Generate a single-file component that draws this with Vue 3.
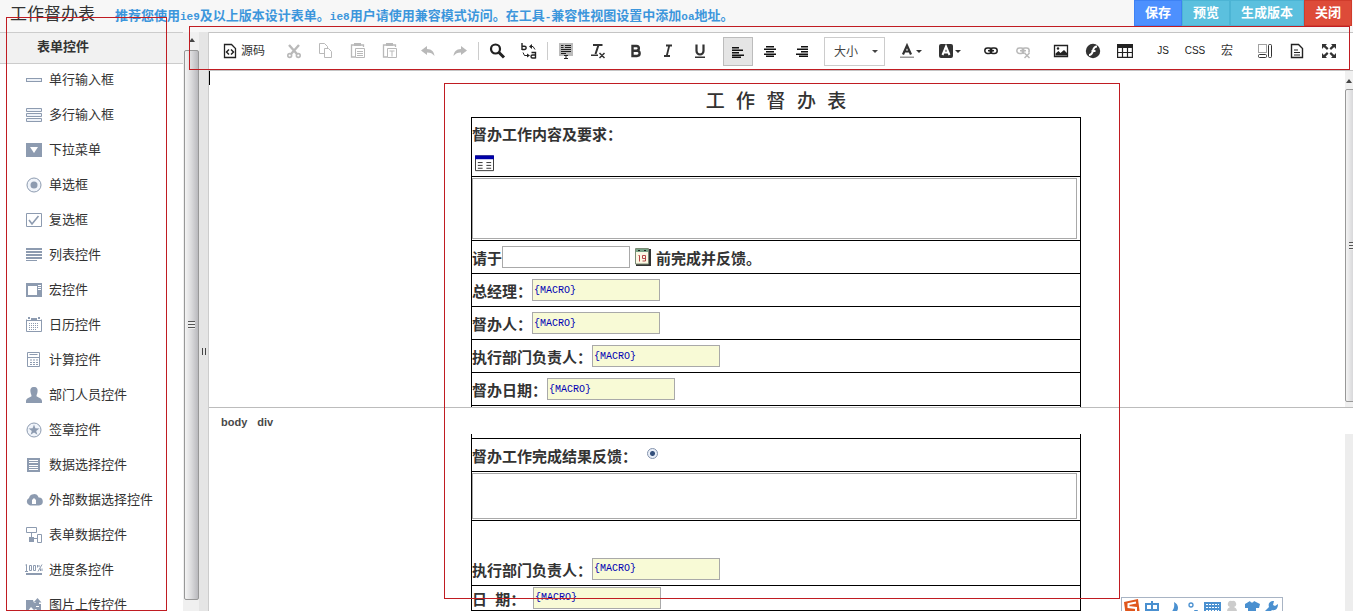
<script setup>
const notice = [
  { t: '推荐您使用' },
  { t: 'ie9', latin: true },
  { t: '及以上版本设计表单。' },
  { t: 'ie8', latin: true },
  { t: '用户请使用兼容模式访问。在工具' },
  { t: '-', latin: true },
  { t: '兼容性视图设置中添加' },
  { t: 'oa', latin: true },
  { t: '地址。' },
]

const actions = [
  { label: '保存', kind: 'save' },
  { label: '预览', kind: 'info' },
  { label: '生成版本', kind: 'info' },
  { label: '关闭', kind: 'close' },
]

const c = '#8d9bb0'
const controls = [
  { label: '单行输入框', icon: `<rect x=".5" y="6.500" width="15" height="3" fill="#eef2f8" stroke="${c}"/>` },
  { label: '多行输入框', icon: `<g fill="#eef2f8" stroke="${c}"><path d="M.5 1.500h15v3H.5zM.5 6.500h15v3H.5zM.5 11.500h15v3H.5z"/></g>` },
  { label: '下拉菜单', icon: `<path fill="${c}" d="M0 1h16v14H0z"/><path fill="#fff" d="M4 5h8l-4 6z"/>` },
  { label: '单选框', icon: `<circle cx="8" cy="8" r="7" fill="#f0f4fa" stroke="${c}"/><circle cx="8" cy="8" r="3.500" fill="${c}"/>` },
  { label: '复选框', icon: `<path fill="#fff" stroke="${c}" d="M.5 1.500h15v13H.5z"/><path fill="none" stroke="${c}" stroke-width="1.600" d="M3 8l3 4 6.500-8"/>` },
  { label: '列表控件', icon: `<path fill="${c}" d="M0 1h16v2H0zM0 4h16v2H0zM0 7h16v2H0zM0 10h16v2H0zM0 13h11v1H0z"/>` },
  { label: '宏控件', icon: `<path fill="${c}" d="M0 1h16v14H0z"/><path fill="#fff" d="M2 4h9v9H2zM12 3h3v1h-3zM12 5h3v1h-3zM12 7h3v1h-3z"/>` },
  { label: '日历控件', icon: `<path fill="none" stroke="${c}" d="M.5 2.500v12h15v-12M0 3.500h16"/><path fill="${c}" d="M2 0h2v2H2zM12 0h2v2h-2zM5 1h6v3H5z"/><path stroke="${c}" stroke-dasharray="1 1" d="M3 6.500h10M3 8.500h10M3 10.500h10M3 12.500h7"/>` },
  { label: '计算控件', icon: `<path fill="none" stroke="${c}" d="M1.500.5h12v14h-12zM3.500 2.500h8M1.500 5.500h12"/><path stroke="${c}" stroke-dasharray="2 1" d="M4 8h8M4 10.500h8M4 12.500h8"/>` },
  { label: '部门人员控件', icon: `<path fill="${c}" d="M8 0c3 0 4 2 3.500 5-.2 2-1 2.500-1 4 0 1 5.500 2 5.500 5v2H0v-2c0-3 5.500-4 5.500-5 0-1.500-.8-2-1-4C4 2 5 0 8 0z"/>` },
  { label: '签章控件', icon: `<circle cx="8" cy="8" r="7" fill="#f0f4fa" stroke="${c}"/><path fill="${c}" d="M8 2.500l1.400 3.800 4 .1-3.200 2.500 1.200 3.900L8 10.500l-3.400 2.300 1.200-3.900-3.200-2.500 4-.1z"/>` },
  { label: '数据选择控件', icon: `<path fill="${c}" d="M1 1h13v14H1z"/><path stroke="#fff" d="M3 3.500h9M3 5.500h9M3 8.500h9M3 10.500h9M3 12.500h9"/>` },
  { label: '外部数据选择控件', icon: `<path fill="${c}" d="M4 13.500a4 4 0 0 1-1-7.500 5 5 0 0 1 9.600-.5A4 4 0 0 1 13 13.500z"/><path fill="#fff" d="M8 6l2 2v4H6V8z"/>` },
  { label: '表单数据控件', icon: `<path fill="none" stroke="${c}" d="M.5.5h10v5H.5zM5.500 6v5M5.500 11.500H11M11.500 7.500h4v8h-4z"/><path fill="${c}" d="M3 10h5v5H3z"/>` },
  { label: '进度条控件', icon: `<path fill="none" stroke="${c}" d="M-.5 3l1-.5V9M-1 9.500h3M3.500 3.500h2v5h-2zM7.500 3.500h2v5h-2zM16 2.500l-4 7M11.500 3v2.500M13 3v2M14.500 6.500V9M16 6.500V9"/><path fill="${c}" d="M0 11h16v2H0z"/>` },
  { label: '图片上传控件', icon: `<path fill="${c}" d="M0 3h7l1 3h2v4h3V7h2v9H0zM11.500 1l4 4.500h-2.500V9h-3V5.500H7.500z"/><path fill="#fff" d="M1 15l4-5 3 3 2-1 3 3z"/>` },
]

const d = '#333'
const g = '#b9b9b9'
const tools = [
  { items: [
    { name: '剪切', icon: `<g stroke="${g}" fill="none" stroke-width="2.400"><path d="M3 2l8 9M13 2l-8 9"/></g><g stroke="${g}" fill="none" stroke-width="1.600"><circle cx="3.700" cy="12.500" r="1.900"/><circle cx="12.300" cy="12.500" r="1.900"/></g>` },
    { name: '复制', icon: `<path fill="#fff" stroke="${g}" d="M1.500.5h5l3 3v7h-8z"/><path fill="#fff" stroke="${g}" d="M6.500 5.500h4l3 3v6h-7z"/>` },
    { name: '粘贴', icon: `<path fill="none" stroke="${g}" stroke-width="1.300" d="M4 2H1.500v12H5M11 2h2.500v2"/><path fill="${g}" d="M4 0h7v3H4z"/><path fill="#fff" stroke="${g}" d="M5.500 5.500h9v9h-9zM7 8.500h6M7 10.500h6M7 12.500h6"/>` },
    { name: '粘贴为纯文本', icon: `<path fill="none" stroke="${g}" stroke-width="1.300" d="M4 2H1.500v12H5M11 2h2.500v2"/><path fill="${g}" d="M4 0h7v3H4z"/><path fill="#fff" stroke="${g}" d="M5.500 5.500h9v9h-9zM7.500 8h5M10 8v5.500"/>` },
  ] },
  { items: [
    { name: '撤销', icon: `<path fill="${g}" d="M1 7.500L7 3v3c5 0 7 3 7.500 7-2-2.500-4-3.500-7.500-3.500V12z"/>` },
    { name: '重做', icon: `<path fill="${g}" d="M15 7.500L9 3v3c-5 0-7 3-7.500 7 2-2.500 4-3.500 7.500-3.500V12z"/>` },
  ], sep: true },
  { items: [
    { name: '查找', icon: `<circle cx="6.500" cy="6" r="4.500" fill="none" stroke="#222" stroke-width="2.200"/><path stroke="#222" stroke-width="3" d="M9.500 9l5.500 5.500"/>` },
    { name: '替换', icon: `<g fill="none" stroke="#222" stroke-width="1.400"><path d="M1 0v7M1 3.200h2.500a1.500 1.500 0 0 1 0 3.300H1M10.500 9.500h4v6M14.500 12h-3a1.500 1.500 0 0 0 0 3h3"/></g><path fill="none" stroke="#222" d="M9 3.500h3l2 3M2 9.500l1.500 3h4"/><path fill="#222" d="M8 3.500l3-2.500v5zM9 12.500l-3-2v4z"/>` },
  ], sep: true },
  { items: [
    { name: '全选', icon: `<path fill="#bbb" d="M1 0h14v13H1z"/><path stroke="#222" d="M3 2.500h2.500M7 2.500h6M3 4.500h2.500M7 4.500h6M3 6.500h10M3 8.500h10M3 10.500h5M6 12.500h4M8 12v4M6 15.500h4"/>` },
    { name: '清除格式', icon: `<path fill="none" stroke="${d}" stroke-width="2" d="M3 2h9.500M8.500 2l-3 9"/><path stroke="${d}" stroke-width="1.500" d="M1 12.200h7M9.500 10l5 5M14.500 10l-5 5"/>` },
  ] },
  { items: [
    { name: '加粗', icon: `<path fill="none" stroke="${d}" stroke-width="2.400" d="M4.500 3h4a2.200 2.200 0 0 1 0 4.700h-4h4.500a2.500 2.500 0 0 1 0 5.300H4.500z"/>` },
    { name: '倾斜', icon: `<path fill="none" stroke="${d}" stroke-width="1.800" d="M6 2.500h6M4 13h6M9.300 2.500L6.700 13"/>` },
    { name: '下划线', icon: `<path fill="none" stroke="${d}" stroke-width="2.200" d="M4.500 1.500v6.500a3.500 3.500 0 0 0 7 0V1.500"/><path fill="${d}" d="M3 13.500h10V15H3z"/>` },
  ] },
  { items: [
    { name: '左对齐', active: true, icon: `<path fill="#111" d="M2 3h7v1.500H2zM2 5.500h11V7H2zM2 8h7v1.500H2zM2 10.500h12V12H2zM2 12.500h9V14H2z"/>` },
    { name: '居中', icon: `<path fill="#111" d="M4 3h8v1.500H4zM2 5.500h12V7H2zM4 8h8v1.500H4zM2 10.500h12V12H2zM4 12.500h8V14H4z"/>` },
    { name: '右对齐', icon: `<path fill="#111" d="M7 3h7v1.500H7zM3 5.500h11V7H3zM7 8h7v1.500H7zM2 10.500h12V12H2zM5 12.500h9V14H5z"/>` },
  ] },
]
const tools2 = [
  { items: [
    { name: '文本颜色', wide: true, icon: `<path fill="none" stroke="${d}" stroke-width="2.200" d="M3 11.500L7 2.500l4 9M4.500 8.500h5"/><path fill="#999" d="M0 13.500h14V15H0z"/><path fill="${d}" d="M16 7h6l-3 3z"/>` },
    { name: '背景颜色', wide: true, icon: `<rect y="1" width="14" height="14" rx="2" fill="${d}"/><path fill="none" stroke="#fff" stroke-width="2" d="M3.500 12L7 3.500l3.500 8.500M4.500 9.500h5"/><path fill="${d}" d="M16 7h6l-3 3z"/>` },
  ] },
  { items: [
    { name: '插入链接', icon: `<g fill="none" stroke="#222" stroke-width="1.500"><rect x="1.800" y="5" width="7" height="5.500" rx="2.700"/><rect x="7.200" y="5" width="7" height="5.500" rx="2.700"/><path d="M5 7.700h6"/></g>` },
    { name: '取消链接', icon: `<g fill="none" stroke="${g}" stroke-width="1.500"><rect x="1.800" y="5" width="7" height="5.500" rx="2.700"/><rect x="7.200" y="5" width="7" height="5.500" rx="2.700"/><path d="M5 7.700h6"/></g><path stroke="#fff" stroke-width="4" d="M10 10l4 4M14 10l-4 4"/><path stroke="${g}" stroke-width="1.500" d="M9.500 10l5 5M14.500 10l-5 5"/>` },
  ] },
  { items: [
    { name: '图像', icon: `<path fill="#fff" stroke="#222" stroke-width="1.300" d="M1.500 2.500h13v11h-13z"/><circle cx="5" cy="5.500" r="1.200" fill="#222"/><path fill="#222" d="M2.500 12.500v-2l3-2.500 2 2L11 7l3 3v2.500z"/>` },
    { name: 'Flash', icon: `<circle cx="8" cy="8" r="7.200" fill="${d}"/><path fill="none" stroke="#fff" stroke-width="2" d="M12 3.500c-3 0-3.500 2-4 4s-1.500 4.500-4 4.500M6.500 8h4"/>` },
    { name: '表格', icon: `<path fill="none" stroke="#222" stroke-width="1.200" d="M.6 2h14.800v12.400H.6zM5.500 4v10M10.500 4v10M0 9.500h16"/><path fill="#222" d="M0 1h16v4H0z"/>` },
  ] },
  { items: [
    { name: 'JS', text: 'JS' },
    { name: 'CSS', text: 'CSS' },
    { name: '宏', text: '宏', cjk: true },
  ] },
  { items: [
    { name: '显示区块', icon: `<path fill="none" stroke="#444" stroke-dasharray="1 1" d="M1.500 1.500h8v8h-8z"/><rect x="1.500" y="11.500" width="8" height="3" rx="1" fill="none" stroke="#333"/><rect x="11.500" y="1.500" width="3" height="13" rx="1" fill="none" stroke="#333"/>` },
    { name: '模板', icon: `<path fill="#fff" stroke="#222" stroke-width="1.400" d="M2.500 1.500h7l4 4v9h-11z"/><path stroke="#222" stroke-width="1.200" d="M5 7h4M5 9.500h6M5 12h6"/>` },
    { name: '全屏', icon: `<path fill="#333" d="M1 1h5L4.600 2.400 7.500 5.300 6 7 2.800 4 1 6zM15 1v5l-1.800-2L10 7 8.500 5.300l2.900-2.900L10 1zM1 15v-5l1.800 2L6 9l1.500 1.700-2.900 2.900L6 15zM15 15h-5l1.400-1.400-2.900-2.900L10 9l3.200 3 1.800-2z"/>` },
  ] },
]

const macros = [
  { id: 'gm', label: '总经理：' },
  { id: 'owner', label: '督办人：' },
  { id: 'lead', label: '执行部门负责人：' },
  { id: 'date', label: '督办日期：' },
]
</script>

<template>
  <div class="app">
    <header class="top">
      <h1>工作督办表</h1>
      <p class="notice"><span v-for="(n, i) in notice" :key="i" :class="{ latin: n.latin }">{{ n.t }}</span></p>
      <nav class="actions">
        <button v-for="a in actions" :key="a.label" type="button" :class="a.kind">{{ a.label }}</button>
      </nav>
    </header>

    <div class="main">
      <aside class="side">
        <h2>表单控件</h2>
        <ul>
          <li v-for="item in controls" :key="item.label">
            <button type="button">
              <svg width="16" height="16" viewBox="0 0 16 16" overflow="visible" aria-hidden="true" v-html="item.icon"></svg>
              <span>{{ item.label }}</span>
            </button>
          </li>
        </ul>
      </aside>

      <div class="scroll side-scroll">
        <i class="arrow"></i>
        <div class="thumb"><i class="grip"></i></div>
      </div>
      <div class="splitter"><i></i></div>

      <section class="editor">
        <div class="toolbar">
          <button type="button" class="source">
            <svg width="14" height="16" viewBox="0 0 14 16" aria-hidden="true">
              <path fill="#fff" stroke="#222" stroke-width="1.300" d="M1.500 1.500h7l4 4v9h-11z" />
              <path fill="none" stroke="#222" stroke-width="1.500" d="M6 6.500L3.500 9 6 11.500M8 6.500L10.500 9 8 11.500" />
            </svg>
            <span>源码</span>
          </button>
          <template v-for="(grp, gi) in tools" :key="gi">
            <div class="group">
              <button v-for="b in grp.items" :key="b.name" type="button" :aria-label="b.name" :class="{ active: b.active }">
                <svg width="16" height="16" viewBox="0 0 16 16" overflow="visible" aria-hidden="true" v-html="b.icon"></svg>
              </button>
            </div>
            <i v-if="grp.sep" class="sep"></i>
          </template>
          <div class="size">
            <select aria-label="大小"><option>大小</option></select>
            <i></i>
          </div>
          <div v-for="(grp, gi) in tools2" :key="'b' + gi" class="group">
            <button v-for="b in grp.items" :key="b.name" type="button" :aria-label="b.name" :class="{ wide: b.wide }">
              <svg v-if="b.icon" :width="b.wide ? 22 : 16" height="16" :viewBox="b.wide ? '0 0 22 16' : '0 0 16 16'" aria-hidden="true" v-html="b.icon"></svg>
              <span v-else :class="b.cjk ? 'cjk' : 'code'">{{ b.text }}</span>
            </button>
          </div>
        </div>

        <div class="pane">
          <div class="page upper">
            <i class="caret"></i>
            <h3>工 作 督 办 表</h3>
            <table>
              <tbody>
                <tr class="intro">
                  <td>
                    <label for="content">督办工作内容及要求：</label>
                    <svg width="19" height="17" viewBox="0 0 20 17" aria-hidden="true">
                      <path fill="#fff" stroke="#333" d="M.5.500h19v15.500H.5z" />
                      <path fill="#0000a8" d="M0 0h20v4H0z" />
                      <path stroke="#333" d="M3 7.500h5M12 7.500h5M3 10.500h5M12 10.500h5M3 13.500h5M12 13.500h5" />
                    </svg>
                  </td>
                </tr>
                <tr><td><textarea id="content" class="tall"></textarea></td></tr>
                <tr>
                  <td>
                    <div class="line">
                      <label for="deadline">请于</label>
                      <input id="deadline" type="text">
                      <svg class="cal" width="16" height="18" viewBox="0 0 16 18" aria-hidden="true">
                        <path fill="#333" d="M1 1h15v17H1z" />
                        <path fill="#fdf8e4" stroke="#7b8b75" d="M.5.500h13v15.500H.5z" />
                        <path fill="#78a486" d="M1 1h12v3H1z" />
                        <path fill="#222" d="M3 2h2v1H3zM9 2h2v1H9z" />
                        <path fill="none" stroke="#b44848" d="M3.500 7.500h1v6M10.500 10.500h-3v-3h3v5.500h-3" />
                      </svg>
                      <span>前完成并反馈。</span>
                    </div>
                  </td>
                </tr>
                <tr v-for="m in macros" :key="m.id">
                  <td>
                    <div class="line">
                      <label :for="m.id">{{ m.label }}</label>
                      <input :id="m.id" class="macro" type="text" value="{MACRO}">
                    </div>
                  </td>
                </tr>
                <tr class="blank"><td></td></tr>
              </tbody>
            </table>
          </div>
          <div class="scroll pane-scroll">
            <i class="arrow"></i>
            <div class="thumb"><i class="grip"></i></div>
          </div>
        </div>

        <div class="path"><a href="#">body</a><a href="#">div</a></div>

        <div class="pane">
          <div class="page">
            <table>
              <tbody>
                <tr class="rest"><td></td></tr>
                <tr>
                  <td>
                    <div class="line">
                      <label for="done">督办工作完成结果反馈：</label>
                      <input id="done" type="radio" checked>
                    </div>
                  </td>
                </tr>
                <tr><td><textarea class="short" aria-label="督办工作完成结果反馈"></textarea></td></tr>
                <tr class="sign">
                  <td>
                    <div class="line">
                      <label for="lead2">执行部门负责人：</label>
                      <input id="lead2" class="macro" type="text" value="{MACRO}">
                    </div>
                  </td>
                </tr>
                <tr class="last">
                  <td>
                    <div class="line">
                      <label for="date2" class="spaced">日&nbsp; 期：</label>
                      <input id="date2" class="macro" type="text" value="{MACRO}">
                    </div>
                  </td>
                </tr>
              </tbody>
            </table>
          </div>
          <div class="scroll pane-scroll idle"></div>
        </div>

        <div class="frame frame-form"></div>
      </section>
    </div>

    <div class="frame frame-side"></div>
    <div class="frame frame-tools"></div>

    <div class="ime">
      <svg width="160" height="20" viewBox="0 0 160 20" aria-hidden="true">
        <path fill="#e0561c" d="M2 4l14-3 2 15-14 3z" />
        <path fill="none" stroke="#fff" stroke-width="2" d="M14 4.500L6.500 6v3l7.500 1v4l-8 1" />
        <g fill="none" stroke="#4a90d0" stroke-width="2"><path d="M24 6h12v6H24zM30 3v15" /><circle cx="69" cy="7" r="2" stroke-width="1.300" /></g>
        <path fill="#4a90d0" d="M52 4c6 3 5 10-1 12h-5c5-2 7-6 6-12zM72 12h4l-2 4z" />
        <path fill="#4a90d0" d="M82 4h17v13H82z" />
        <path stroke="#fff" stroke-dasharray="2 1" d="M84 6.500h13M84 9.500h13M84 12.500h13" />
        <path fill="#ccc" d="M110 3a3 3 0 0 1 2 6c2 1 3 2 3 5h-10c0-3 1-4 3-5a3 3 0 0 1 2-6z" />
        <path fill="#4a90d0" d="M123 6l5-3c1 2 3 2 4 0l6 3-1 4h-3v9h-8V10h-3zM156 6l-3 2-2-1 1-4c-5 0-6 3-5 6l-6 6 3 3 6-6c4 1 6-2 6-6z" />
      </svg>
    </div>
  </div>
</template>

<style>
body { margin: 0; overflow: hidden; }
</style>

<style scoped>
.app {
  position: relative;
  display: flex;
  flex-direction: column;
  height: 100vh;
  overflow: hidden;
  background: #fff;
  color: #333;
  font: 13px/20px "Liberation Sans", "Noto Sans CJK SC", sans-serif;
}
.app *, .app *::before { box-sizing: border-box; }
h1, h2, h3, p, ul { margin: 0; padding: 0; }
button { margin: 0; padding: 0; border: 0; background: none; color: inherit; font: inherit; white-space: nowrap; }
svg { flex: none; display: block; }

.top { display: flex; flex: none; height: 32px; background: #f7f7f7; }
h1 { padding-left: 10px; font-size: 17px; font-weight: 400; line-height: 30px; white-space: nowrap; }
.notice { flex: 1; min-width: 0; overflow: hidden; padding-left: 20px; color: #3c96dc; font-weight: 700; line-height: 32px; white-space: nowrap; }
.latin { font-family: "Liberation Mono", monospace; font-size: 11px; }
.actions { display: flex; flex: none; height: 26px; padding-right: 1px; }
.actions button { padding: 0 10px; border: 1px solid; color: #fff; font-weight: 700; line-height: 22px; }
.actions .save { background: #4d90fe; border-color: #3e82f4; }
.actions .info { background: #5bc0de; border-color: #4cb4d4; }
.actions .close { background: #dd4b39; border-color: #d03c2c; }

.main { display: flex; flex: 1; min-height: 0; }
.side { flex: none; width: 183px; overflow: hidden; }
h2 { height: 32px; padding-left: 37px; border: solid #ccc; border-width: 1px 0; background: #f1f1f1; font-size: 13px; line-height: 28px; }
ul { list-style: none; }
li button { display: flex; align-items: center; gap: 7px; width: 100%; height: 35px; padding: 0 0 3px 26px; }

.scroll { display: flex; flex: none; flex-direction: column; background: #f0f0f0; }
.side-scroll { width: 16px; padding: 6px 0 11px 1px; }
.arrow { flex: none; align-self: center; width: 0; height: 4px; border: solid transparent; border-width: 0 3px 4px; border-bottom-color: #444; }
.thumb { display: flex; flex: 1; align-items: center; justify-content: center; border: 1px solid #989898; border-radius: 2px; background: linear-gradient(90deg, #f4f4f4, #dadadc 50%, #b9b9bd); }
.side-scroll .thumb { margin-top: 8px; }
.grip { width: 7px; height: 8px; background: repeating-linear-gradient(#555 0 1px, #eee 1px 3px); }
.splitter { display: flex; flex: none; align-items: center; justify-content: center; width: 10px; padding-top: 60px; border-right: 1px solid #ccc; background: #e5e5e5; }
.splitter i { width: 4px; height: 7px; border: solid #444; border-width: 0 1px; }

.editor { position: relative; display: grid; flex: 1; grid-template-rows: auto minmax(0, 336fr) auto minmax(0, 177fr); min-width: 0; }
.toolbar { display: flex; min-width: 0; padding: 4px 7px; border: solid #c4c4c4; border-width: 1px 0; overflow: hidden; font-size: 12px; }
.source { display: flex; flex: none; align-items: center; justify-content: center; gap: 4px; width: 56px; height: 29px; padding-bottom: 1px; }
.group { display: flex; flex: none; }
.source + .group, .group + .group, .group + .size, .size + .group { margin-left: 6px; }
.group button { display: flex; align-items: center; justify-content: center; width: 32px; height: 29px; padding-bottom: 1px; }
.group .active { width: 30px; margin: 0 1px; padding: 0; border: 1px solid #bcbcbc; background: #e5e5e5; }
.group .wide { width: 39px; }
.sep { flex: none; width: 1px; height: 18px; margin: 5px 2px; background: #ccc; }
.size { position: relative; flex: none; width: 61px; }
.size select { width: 100%; height: 29px; padding: 0 9px; appearance: none; border: 1px solid #ccc; border-radius: 0; background: #fff; color: #444; font: inherit; }
.size i { position: absolute; top: 13px; right: 7px; border: solid transparent; border-width: 3px 3px 0; border-top-color: #444; }
.code { font-size: 10px; color: #222; }
.cjk { color: #333; }

.pane { display: flex; min-height: 0; overflow: hidden; }
.page { position: relative; flex: 1; min-width: 0; padding-right: 2px; }
.caret { position: absolute; top: 0; left: 0; width: 1px; height: 14px; background: #000; }
h3 { height: 46px; font: 500 19px/64px "Liberation Mono", "Noto Sans CJK SC", monospace; text-align: center; }
table { width: 610px; max-width: 100%; margin: 0 auto; border-collapse: collapse; font-size: 15px; font-weight: 700; }
td { height: 33px; padding: 0; border: 1px solid #000; }
.intro td { height: 59px; vertical-align: top; }
.intro label { display: block; padding-top: 7px; }
.intro svg { margin: 10px 0 0 3px; }
textarea { display: block; width: calc(100% - 3px); margin: 1px 0; padding: 2px; border: 1px solid #a9a9a9; resize: none; }
.tall { height: 61px; }
.short { height: 46px; }
.line { display: flex; align-items: center; height: 22px; white-space: nowrap; }
.line label, .line span { padding-top: 4px; }
.line input[type="text"] { width: 128px; height: 22px; margin: 0; padding: 0 1px; border: 1px solid #a9a9a9; border-radius: 0; background: #fff; }
.line .macro[type="text"] { background: #f8fad6; color: #0000b4; font: 10px "Liberation Mono", monospace; }
.cal { margin: 0 5px; }
.blank td { height: 40px; }
.rest td { height: 4px; border-top: 0; }
.line input[type="radio"] { width: 11px; height: 11px; margin: 0 0 2px 10px; appearance: none; border: 1px solid #8594ad; border-radius: 50%; background: radial-gradient(#34507c 0 2px, #e8eef8 3px); }
.sign td { height: 65px; padding-bottom: 5px; vertical-align: bottom; }
.last td { height: 25px; }
.spaced { width: 61px; }

.pane-scroll { width: 8px; overflow: hidden; }
.pane-scroll .arrow { margin-top: 8px; }
.pane-scroll .thumb { margin: 6px -7px 5px 0; }
.pane-scroll.idle { background: #ededed; }
.path { display: flex; gap: 10px; height: 27px; padding-left: 12px; border-top: 1px solid #bcbcbc; font-size: 11px; font-weight: 700; line-height: 28px; }
.path a { color: #484848; text-decoration: none; }

.frame { position: absolute; border: 1px solid #c01c22; pointer-events: none; }
.frame-side { top: 17px; bottom: 0; left: 6px; width: 161px; }
.frame-tools { top: 26px; left: 189px; right: 3px; height: 44px; }
.frame-form { top: 51px; bottom: 12px; left: 235px; right: 233px; }
.ime { position: absolute; right: 70px; bottom: 0; width: 162px; height: 14px; overflow: hidden; border: 1px solid #a8b4c4; border-bottom: 0; background: #fff; }
</style>
